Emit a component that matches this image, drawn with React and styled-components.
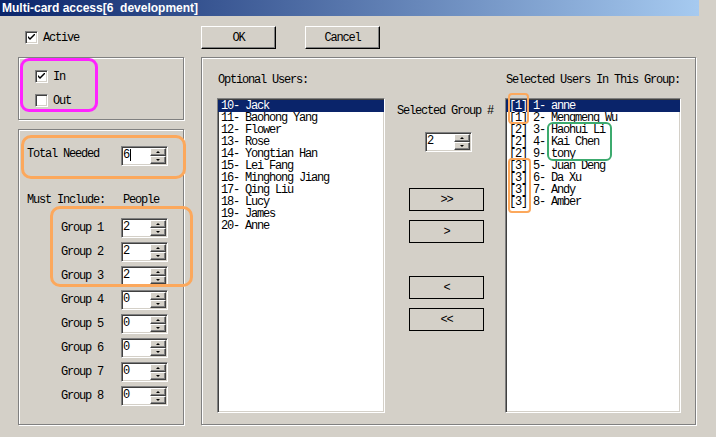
import React from 'react';
import styled, { createGlobalStyle } from 'styled-components';

const Global = createGlobalStyle`
  html, body { margin: 0; padding: 0; background: #d4d0c8; }
  body {
    width: 716px; height: 437px; overflow: hidden;
    font-family: "Liberation Mono", "Courier New", monospace;
    font-size: 12px; color: #000;
  }
  * { box-sizing: border-box; }
`;

const Window = styled.div`
  position: relative;
  width: 716px;
  height: 437px;
  background: #d4d0c8;
  display: flex;
  flex-direction: column;
`;

const TitleBar = styled.div`
  width: 699px;
  height: 16px;
  padding-left: 2px;
  background: linear-gradient(to right, #0a246a, #a6caf0);
  color: #fff;
  font: bold 12px "Liberation Sans", Arial, sans-serif;
  line-height: 16px;
  white-space: pre;
`;

const Content = styled.div`
  display: grid;
  grid-template-columns: 166px 495px;
  grid-template-rows: 23px 368px;
  column-gap: 17px;
  row-gap: 8px;
  padding: 10px 0 0 18px;
`;

const Txt = styled.span`
  font-family: "Liberation Mono", "Courier New", monospace;
  font-size: 12px;
  line-height: 12px;
  letter-spacing: -1.2px;
  white-space: pre;
  color: ${p => (p.$inverse ? '#fff' : '#000')};
`;

const ActiveRow = styled.div`
  display: flex;
  align-items: center;
  gap: 5px;
  padding-left: 7px;
`;

const CheckBox = styled.span`
  width: 13px;
  height: 13px;
  flex: none;
  background: #fff;
  border: 1px solid;
  border-color: #808080 #fff #fff #808080;
  box-shadow: inset 1px 1px 0 #404040, inset -1px -1px 0 #d4d0c8;
  display: flex;
  align-items: center;
  justify-content: center;
`;

const Check = ({ on }) => (
  <CheckBox>
    {on && (
      <svg width="7" height="7" viewBox="0 0 7 7">
        <path d="M0 2 L0 4 L2 6 L7 1 L7 -1 L2 4 Z" fill="#000" />
      </svg>
    )}
  </CheckBox>
);

const LeftColumn = styled.div`
  display: flex;
  flex-direction: column;
  gap: 9px;
`;

const GroupBox = styled.div`
  border: 1px solid #808080;
  box-shadow: inset 1px 1px 0 #fff, 1px 1px 0 #fff;
  height: ${p => p.$h}px;
`;

const DirBox = styled(GroupBox)`
  display: flex;
  flex-direction: column;
  gap: 11px;
  padding: 12px 0 0 16px;
`;

const CheckRow = styled.div`
  display: flex;
  align-items: center;
  gap: 5px;
`;

const CountBox = styled(GroupBox)`
  display: flex;
  flex-direction: column;
  padding: 16px 0 0 8px;
`;

const FieldRow = styled.div`
  display: grid;
  grid-template-columns: ${p => p.$label}px 47px;
  align-items: ${p => p.$align || 'center'};
  margin-left: ${p => p.$indent || 0}px;
  margin-top: ${p => p.$mt || 0}px;
`;

const HeadRow = styled.div`
  display: grid;
  grid-template-columns: 96px auto;
  margin-top: 28px;
  margin-bottom: 12px;
`;

const GroupList = styled.div`
  display: flex;
  flex-direction: column;
  gap: 4px;
  margin-left: 34px;
`;

const SpinFrame = styled.div`
  width: 47px;
  height: 20px;
  background: #fff;
  border: 1px solid;
  border-color: #808080 #fff #fff #808080;
  box-shadow: inset 1px 1px 0 #404040, inset -1px -1px 0 #d4d0c8;
  display: flex;
  padding: 1px;
`;

const SpinValue = styled.div`
  flex: 1;
  display: flex;
  align-items: flex-start;
  padding-top: 1px;
`;

const Caret = styled.span`
  width: 1px;
  height: 12px;
  background: #000;
  margin-left: 1px;
`;

const SpinButtons = styled.div`
  width: 16px;
  display: flex;
  flex-direction: column;
`;

const SpinBtn = styled.div`
  height: 8px;
  background: #d4d0c8;
  border: 1px solid;
  border-color: #fff #404040 #404040 #fff;
  box-shadow: inset -1px -1px 0 #808080;
  display: flex;
  align-items: center;
  justify-content: center;
  &::after {
    content: '';
    width: 0;
    height: 0;
    border-left: 2px solid transparent;
    border-right: 2px solid transparent;
    ${p => (p.$down ? 'border-top: 2px solid #000;' : 'border-bottom: 2px solid #000;')}
  }
`;

const Spin = ({ value, caret }) => (
  <SpinFrame>
    <SpinValue>
      <Txt>{value}</Txt>
      {caret && <Caret />}
    </SpinValue>
    <SpinButtons>
      <SpinBtn />
      <SpinBtn $down />
    </SpinButtons>
  </SpinFrame>
);

const RightColumnTop = styled.div`
  display: flex;
  gap: 29px;
`;

const PushButton = styled.button`
  width: 75px;
  height: 23px;
  padding: 0;
  background: #d4d0c8;
  border: 1px solid;
  border-color: #fff #000 #000 #fff;
  box-shadow: inset -1px -1px 0 #808080, inset 1px 1px 0 #d4d0c8;
  display: flex;
  align-items: center;
  justify-content: center;
  font: inherit;
`;

const MoveButton = styled.button`
  width: 75px;
  height: 23px;
  padding: 0;
  background: #d4d0c8;
  border: 1px solid #000;
  display: flex;
  align-items: center;
  justify-content: center;
  margin-top: ${p => p.$mt}px;
  font: inherit;
`;

const MainBox = styled(GroupBox)`
  display: grid;
  grid-template-columns: 168px 120px 176px;
  padding: 16px 0 0 15px;
`;

const ListColumn = styled.div`
  display: flex;
  flex-direction: column;
  gap: 12px;
  padding-left: 1px;
`;

const ListBox = styled.div`
  margin-left: -1px;
  height: 315px;
  background: #fff;
  border: 1px solid;
  border-color: #808080 #fff #fff #808080;
  box-shadow: inset 1px 1px 0 #404040, inset -1px -1px 0 #d4d0c8;
  padding-top: 1px;
  display: flex;
  flex-direction: column;
`;

const Item = styled.div`
  height: 12px;
  display: flex;
  align-items: center;
  padding-left: 3px;
  background: ${p => (p.$selected ? '#0a246a' : 'transparent')};
`;

const MiddleColumn = styled.div`
  display: flex;
  flex-direction: column;
  align-items: flex-start;
  padding-top: 30px;
`;

const MidLabel = styled.div`
  padding-left: 12px;
`;

const MidSpin = styled.div`
  margin: 14px 0 0 40px;
`;

const MoveGroup = styled.div`
  display: flex;
  flex-direction: column;
  margin-left: 24px;
`;

const Ring = styled.div`
  position: absolute;
  left: ${p => p.$x}px;
  top: ${p => p.$y}px;
  width: ${p => p.$w}px;
  height: ${p => p.$h}px;
  border: ${p => p.$t || 3}px solid ${p => p.$c};
  border-radius: ${p => p.$r || 9}px;
  pointer-events: none;
`;

const optional = [
  '10- Jack', '11- Baohong Yang', '12- Flower', '13- Rose', '14- Yongtian Han',
  '15- Lei Fang', '16- Minghong Jiang', '17- Qing Liu', '18- Lucy', '19- James', '20- Anne',
];

const selected = [
  '[1] 1- anne', '[1] 2- Mengmeng Wu', '[2] 3- Haohui Li', '[2] 4- Kai Chen', '[2] 9- tony',
  '[3] 5- Juan Deng', '[3] 6- Da Xu', '[3] 7- Andy', '[3] 8- Amber',
];

const groups = [
  ['Group 1', '2'], ['Group 2', '2'], ['Group 3', '2'], ['Group 4', '0'],
  ['Group 5', '0'], ['Group 6', '0'], ['Group 7', '0'], ['Group 8', '0'],
];

export default function App() {
  return (
    <Window>
      <Global />
      <TitleBar>{'Multi-card access[6  development]'}</TitleBar>
      <Content>
        <ActiveRow>
          <Check on />
          <Txt>Active</Txt>
        </ActiveRow>
        <RightColumnTop>
          <PushButton><Txt>OK</Txt></PushButton>
          <PushButton><Txt>Cancel</Txt></PushButton>
        </RightColumnTop>

        <LeftColumn>
          <DirBox $h={63}>
            <CheckRow><Check on /><Txt>In</Txt></CheckRow>
            <CheckRow><Check /><Txt>Out</Txt></CheckRow>
          </DirBox>
          <CountBox $h={296}>
            <FieldRow $label={94} $align="start">
              <Txt style={{ marginTop: 2 }}>Total Needed</Txt>
              <Spin value="6" caret />
            </FieldRow>
            <HeadRow>
              <Txt>Must Include:</Txt>
              <Txt>People</Txt>
            </HeadRow>
            <GroupList>
              {groups.map(([g, v]) => (
                <FieldRow key={g} $label={60}>
                  <Txt>{g}</Txt>
                  <Spin value={v} />
                </FieldRow>
              ))}
            </GroupList>
          </CountBox>
        </LeftColumn>

        <MainBox $h={368}>
          <ListColumn>
            <Txt>Optional Users:</Txt>
            <ListBox>
              {optional.map((u, i) => (
                <Item key={u} $selected={i === 0}><Txt $inverse={i === 0}>{u}</Txt></Item>
              ))}
            </ListBox>
          </ListColumn>
          <MiddleColumn>
            <MidLabel><Txt>Selected Group #</Txt></MidLabel>
            <MidSpin><Spin value="2" /></MidSpin>
            <MoveGroup>
              <MoveButton $mt={36}><Txt>{'>>'}</Txt></MoveButton>
              <MoveButton $mt={9}><Txt>{'>'}</Txt></MoveButton>
              <MoveButton $mt={33}><Txt>{'<'}</Txt></MoveButton>
              <MoveButton $mt={9}><Txt>{'<<'}</Txt></MoveButton>
            </MoveGroup>
          </MiddleColumn>
          <ListColumn>
            <Txt>Selected Users In This Group:</Txt>
            <ListBox>
              {selected.map((u, i) => (
                <Item key={u} $selected={i === 0}><Txt $inverse={i === 0}>{u}</Txt></Item>
              ))}
            </ListBox>
          </ListColumn>
        </MainBox>
      </Content>

      <Ring $x={20} $y={58} $w={78} $h={54} $c="#ff22ff" />
      <Ring $x={21} $y={135} $w={165} $h={44} $c="#fca85c" $r={10} />
      <Ring $x={50} $y={206} $w={143} $h={81} $c="#fca85c" $r={10} />
      <Ring $x={508} $y={93} $w={21} $h={31} $c="#fca85c" $r={4} $t={2} />
      <Ring $x={508} $y={158} $w={23} $h={55} $c="#fca85c" $r={4} $t={2} />
      <Ring $x={547} $y={122} $w={65} $h={39} $c="#3caa6e" $r={6} $t={2} />
    </Window>
  );
}
